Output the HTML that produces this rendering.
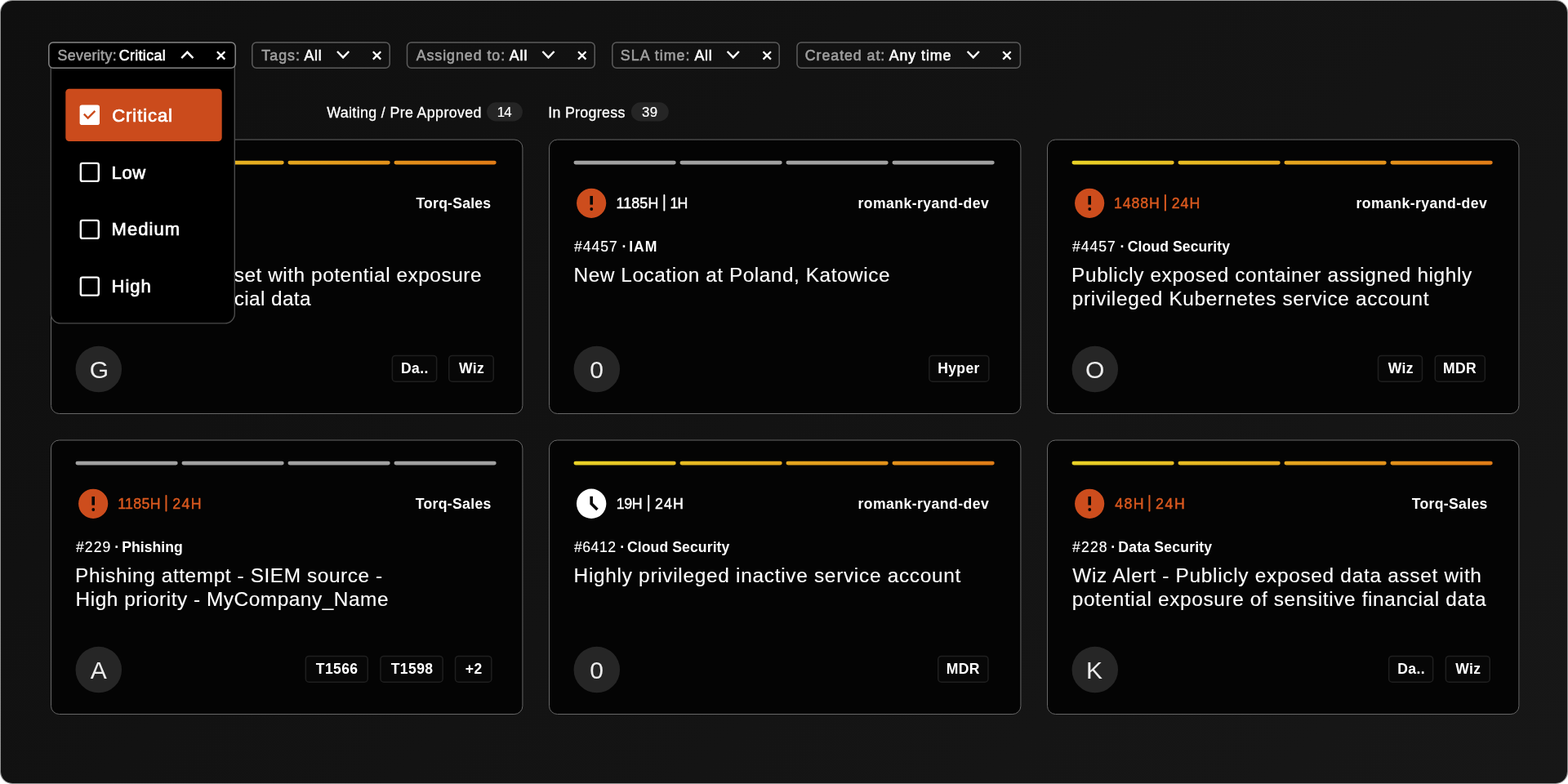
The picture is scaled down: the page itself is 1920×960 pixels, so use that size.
<!DOCTYPE html>
<html lang="en"><head><meta charset="utf-8"><title>Cases board</title>
<style>
html,body{margin:0;padding:0;background:#fff;}
body{width:1920px;height:960px;position:relative;overflow:hidden;font-family:"Liberation Sans",sans-serif;color:#fff;}
.panel{position:absolute;left:1px;top:1px;width:1918px;height:958px;border-radius:14px;background:linear-gradient(135deg,#0f0f0f 0%,#171717 100%);box-shadow:0 0 0 1px rgba(0,0,0,.42);overflow:hidden;}
.t{position:absolute;white-space:nowrap;line-height:1;}
.tx{position:absolute;left:0;top:0;width:1920px;height:960px;will-change:transform;z-index:1;}
.tx.top{z-index:6;}
svg{position:absolute;overflow:visible;}
.base{left:0;top:0;z-index:0;}
.ddsvg{left:0;top:0;z-index:5;}
</style></head><body>
<div class="panel"></div>

<svg class="base" width="1920" height="960" viewBox="0 0 1920 960"><defs><linearGradient id="pg" gradientUnits="userSpaceOnUse" x1="30.5" y1="0" x2="545.7" y2="0"><stop offset="0" stop-color="#e9d227"/><stop offset="1" stop-color="#e07c17"/></linearGradient></defs><rect x="308.8" y="51.9" width="168.4" height="31.3" rx="5.2" fill="none" stroke="#5c5c5c" stroke-width="1.5"/><rect x="498.5" y="51.9" width="229.7" height="31.3" rx="5.2" fill="none" stroke="#5c5c5c" stroke-width="1.5"/><rect x="749.8" y="51.9" width="204.4" height="31.3" rx="5.2" fill="none" stroke="#5c5c5c" stroke-width="1.5"/><rect x="976.0" y="51.9" width="273.4" height="31.3" rx="5.2" fill="none" stroke="#5c5c5c" stroke-width="1.5"/><path d="M413.00 63.0 L420.1 70.4 L427.20 63.0" fill="none" stroke="#fff" stroke-width="2.45" stroke-linecap="butt" stroke-linejoin="miter"/><path d="M456.80 63.20 L466.20 72.60 M466.20 63.20 L456.80 72.60" fill="none" stroke="#fff" stroke-width="2.3" stroke-linecap="butt"/><path d="M664.40 63.0 L671.5 70.4 L678.60 63.0" fill="none" stroke="#fff" stroke-width="2.45" stroke-linecap="butt" stroke-linejoin="miter"/><path d="M708.05 63.20 L717.45 72.60 M717.45 63.20 L708.05 72.60" fill="none" stroke="#fff" stroke-width="2.3" stroke-linecap="butt"/><path d="M890.65 63.0 L897.75 70.4 L904.85 63.0" fill="none" stroke="#fff" stroke-width="2.45" stroke-linecap="butt" stroke-linejoin="miter"/><path d="M934.55 63.20 L943.95 72.60 M943.95 63.20 L934.55 72.60" fill="none" stroke="#fff" stroke-width="2.3" stroke-linecap="butt"/><path d="M1184.65 63.0 L1191.75 70.4 L1198.85 63.0" fill="none" stroke="#fff" stroke-width="2.45" stroke-linecap="butt" stroke-linejoin="miter"/><path d="M1228.20 63.20 L1237.60 72.60 M1237.60 63.20 L1228.20 72.60" fill="none" stroke="#fff" stroke-width="2.3" stroke-linecap="butt"/><rect x="596.1" y="125.3" width="43.8" height="23.2" rx="11.6" fill="#252525"/><rect x="772.9" y="125.3" width="45.9" height="23.2" rx="11.6" fill="#252525"/><g transform="translate(62 170.5)"><rect x="0.5" y="0.5" width="577.4" height="335.5" rx="10" fill="#040404" stroke="#676767" stroke-width="1"/><rect x="30.5" y="26.2" width="125.2" height="4.75" rx="2.37" fill="url(#pg)"/><rect x="160.5" y="26.2" width="125.2" height="4.75" rx="2.37" fill="url(#pg)"/><rect x="290.5" y="26.2" width="125.2" height="4.75" rx="2.37" fill="url(#pg)"/><rect x="420.5" y="26.2" width="125.2" height="4.75" rx="2.37" fill="url(#pg)"/><circle cx="52.15" cy="78.3" r="18.1" fill="#cd4d1d"/><rect x="50.40" y="69.45" width="3.6" height="10.65" fill="#060606"/><circle cx="52.25" cy="85.50" r="1.9" fill="#060606"/><circle cx="58.8" cy="281.6" r="28.25" fill="#262626"/></g><g transform="translate(672 170.5)"><rect x="0.5" y="0.5" width="577.4" height="335.5" rx="10" fill="#040404" stroke="#676767" stroke-width="1"/><rect x="30.5" y="26.2" width="125.2" height="4.75" rx="2.37" fill="#a1a1a1"/><rect x="160.5" y="26.2" width="125.2" height="4.75" rx="2.37" fill="#a1a1a1"/><rect x="290.5" y="26.2" width="125.2" height="4.75" rx="2.37" fill="#a1a1a1"/><rect x="420.5" y="26.2" width="125.2" height="4.75" rx="2.37" fill="#a1a1a1"/><circle cx="52.15" cy="78.3" r="18.1" fill="#cd4d1d"/><rect x="50.40" y="69.45" width="3.6" height="10.65" fill="#060606"/><circle cx="52.25" cy="85.50" r="1.9" fill="#060606"/><circle cx="58.8" cy="281.6" r="28.25" fill="#262626"/></g><g transform="translate(1282 170.5)"><rect x="0.5" y="0.5" width="577.4" height="335.5" rx="10" fill="#040404" stroke="#676767" stroke-width="1"/><rect x="30.5" y="26.2" width="125.2" height="4.75" rx="2.37" fill="url(#pg)"/><rect x="160.5" y="26.2" width="125.2" height="4.75" rx="2.37" fill="url(#pg)"/><rect x="290.5" y="26.2" width="125.2" height="4.75" rx="2.37" fill="url(#pg)"/><rect x="420.5" y="26.2" width="125.2" height="4.75" rx="2.37" fill="url(#pg)"/><circle cx="52.15" cy="78.3" r="18.1" fill="#cd4d1d"/><rect x="50.40" y="69.45" width="3.6" height="10.65" fill="#060606"/><circle cx="52.25" cy="85.50" r="1.9" fill="#060606"/><circle cx="58.8" cy="281.6" r="28.25" fill="#262626"/></g><g transform="translate(62 538.5)"><rect x="0.5" y="0.5" width="577.4" height="335.5" rx="10" fill="#040404" stroke="#676767" stroke-width="1"/><rect x="30.5" y="26.2" width="125.2" height="4.75" rx="2.37" fill="#a1a1a1"/><rect x="160.5" y="26.2" width="125.2" height="4.75" rx="2.37" fill="#a1a1a1"/><rect x="290.5" y="26.2" width="125.2" height="4.75" rx="2.37" fill="#a1a1a1"/><rect x="420.5" y="26.2" width="125.2" height="4.75" rx="2.37" fill="#a1a1a1"/><circle cx="52.15" cy="78.3" r="18.1" fill="#cd4d1d"/><rect x="50.40" y="69.45" width="3.6" height="10.65" fill="#060606"/><circle cx="52.25" cy="85.50" r="1.9" fill="#060606"/><circle cx="58.8" cy="281.6" r="28.25" fill="#262626"/></g><g transform="translate(672 538.5)"><rect x="0.5" y="0.5" width="577.4" height="335.5" rx="10" fill="#040404" stroke="#676767" stroke-width="1"/><rect x="30.5" y="26.2" width="125.2" height="4.75" rx="2.37" fill="url(#pg)"/><rect x="160.5" y="26.2" width="125.2" height="4.75" rx="2.37" fill="url(#pg)"/><rect x="290.5" y="26.2" width="125.2" height="4.75" rx="2.37" fill="url(#pg)"/><rect x="420.5" y="26.2" width="125.2" height="4.75" rx="2.37" fill="url(#pg)"/><circle cx="52.15" cy="78.3" r="18.2" fill="#fff"/><path d="M52.15 69.20 V78.15 L59.45 85.45" fill="none" stroke="#060606" stroke-width="3.6" stroke-linejoin="miter"/><circle cx="58.8" cy="281.6" r="28.25" fill="#262626"/></g><g transform="translate(1282 538.5)"><rect x="0.5" y="0.5" width="577.4" height="335.5" rx="10" fill="#040404" stroke="#676767" stroke-width="1"/><rect x="30.5" y="26.2" width="125.2" height="4.75" rx="2.37" fill="url(#pg)"/><rect x="160.5" y="26.2" width="125.2" height="4.75" rx="2.37" fill="url(#pg)"/><rect x="290.5" y="26.2" width="125.2" height="4.75" rx="2.37" fill="url(#pg)"/><rect x="420.5" y="26.2" width="125.2" height="4.75" rx="2.37" fill="url(#pg)"/><circle cx="52.15" cy="78.3" r="18.1" fill="#cd4d1d"/><rect x="50.40" y="69.45" width="3.6" height="10.65" fill="#060606"/><circle cx="52.25" cy="85.50" r="1.9" fill="#060606"/><circle cx="58.8" cy="281.6" r="28.25" fill="#262626"/></g><rect x="205.50" y="238.1" width="2" height="20.5" rx="0.8" fill="#da591f"/><rect x="812.35" y="238.1" width="2" height="20.5" rx="0.8" fill="#fff"/><rect x="1425.90" y="238.1" width="2" height="20.5" rx="0.8" fill="#da591f"/><rect x="202.45" y="606.1" width="2" height="20.5" rx="0.8" fill="#da591f"/><rect x="793.20" y="606.1" width="2" height="20.5" rx="0.8" fill="#fff"/><rect x="1406.45" y="606.1" width="2" height="20.5" rx="0.8" fill="#da591f"/><rect x="480.35" y="435.45" width="54.30" height="31.8" rx="4" fill="#070707" stroke="#1f1f1f" stroke-width="1.5"/><rect x="549.75" y="435.45" width="54.50" height="31.8" rx="4" fill="#070707" stroke="#1f1f1f" stroke-width="1.5"/><rect x="1137.85" y="435.45" width="73.00" height="31.8" rx="4" fill="#070707" stroke="#1f1f1f" stroke-width="1.5"/><rect x="1687.55" y="435.45" width="53.95" height="31.8" rx="4" fill="#070707" stroke="#1f1f1f" stroke-width="1.5"/><rect x="1757.25" y="435.45" width="61.10" height="31.8" rx="4" fill="#070707" stroke="#1f1f1f" stroke-width="1.5"/><rect x="374.35" y="803.45" width="75.90" height="31.8" rx="4" fill="#070707" stroke="#1f1f1f" stroke-width="1.5"/><rect x="465.95" y="803.45" width="76.20" height="31.8" rx="4" fill="#070707" stroke="#1f1f1f" stroke-width="1.5"/><rect x="557.55" y="803.45" width="44.30" height="31.8" rx="4" fill="#070707" stroke="#1f1f1f" stroke-width="1.5"/><rect x="1148.75" y="803.45" width="61.20" height="31.8" rx="4" fill="#070707" stroke="#1f1f1f" stroke-width="1.5"/><rect x="1700.65" y="803.45" width="54.00" height="31.8" rx="4" fill="#070707" stroke="#1f1f1f" stroke-width="1.5"/><rect x="1770.35" y="803.45" width="53.90" height="31.8" rx="4" fill="#070707" stroke="#1f1f1f" stroke-width="1.5"/></svg>
<svg class="ddsvg" width="1920" height="960" viewBox="0 0 1920 960"><path d="M62.3 80 V383.9 a12 12 0 0 0 12 12 H275.3 a12 12 0 0 0 12 -12 V80 Z" fill="#000" stroke="#4b4b4b" stroke-width="1.4"/><rect x="59.8" y="51.9" width="228.4" height="31.3" rx="5.2" fill="#000" stroke="#858585" stroke-width="1.5"/><path d="M222.25 71.2 L229.35 63.8 L236.45 71.2" fill="none" stroke="#fff" stroke-width="2.45" stroke-linecap="butt" stroke-linejoin="miter"/><path d="M265.90 63.20 L275.30 72.60 M275.30 63.20 L265.90 72.60" fill="none" stroke="#fff" stroke-width="2.3" stroke-linecap="butt"/><rect x="80.3" y="108.7" width="191.4" height="64.3" rx="4.5" fill="#cb4b1c"/><rect x="97.6" y="128.5" width="24.4" height="24.6" rx="2.8" fill="#fff"/><path d="M102.85 139.7 L107.7 144.55 L116.35 135.9" fill="none" stroke="#cb4b1c" stroke-width="2.4"/><rect x="98.8" y="199.89999999999998" width="22" height="22" rx="2.2" fill="none" stroke="#fff" stroke-width="2.4"/><rect x="98.8" y="269.9" width="22" height="22" rx="2.2" fill="none" stroke="#fff" stroke-width="2.4"/><rect x="98.8" y="339.59999999999997" width="22" height="22" rx="2.2" fill="none" stroke="#fff" stroke-width="2.4"/></svg>
<div class="tx"><span class="t" id="f2a" style="left:320.31px;top:60.0px;font-size:17.8px;color:#a0a0a0;letter-spacing:1.047px;-webkit-text-stroke:0.55px #a0a0a0;">Tags:</span>
<span class="t" id="f2b" style="left:372.47px;top:60.0px;font-size:17.8px;color:#fff;letter-spacing:0.687px;-webkit-text-stroke:0.55px #fff;">All</span>
<span class="t" id="f3a" style="left:509.68px;top:60.0px;font-size:17.8px;color:#a0a0a0;letter-spacing:0.965px;-webkit-text-stroke:0.55px #a0a0a0;">Assigned to:</span>
<span class="t" id="f3b" style="left:623.68px;top:60.0px;font-size:17.8px;color:#fff;letter-spacing:0.962px;-webkit-text-stroke:0.55px #fff;">All</span>
<span class="t" id="f4a" style="left:759.80px;top:60.0px;font-size:17.8px;color:#a0a0a0;letter-spacing:1.070px;-webkit-text-stroke:0.55px #a0a0a0;">SLA time:</span>
<span class="t" id="f4b" style="left:850.47px;top:60.0px;font-size:17.8px;color:#fff;letter-spacing:0.781px;-webkit-text-stroke:0.55px #fff;">All</span>
<span class="t" id="f5a" style="left:985.84px;top:60.0px;font-size:17.8px;color:#a0a0a0;letter-spacing:0.944px;-webkit-text-stroke:0.55px #a0a0a0;">Created at:</span>
<span class="t" id="f5b" style="left:1088.68px;top:60.0px;font-size:17.8px;color:#fff;letter-spacing:0.952px;-webkit-text-stroke:0.55px #fff;">Any time</span>
<span class="t" id="tab1" style="left:400.27px;top:130.0px;font-size:17.8px;color:#fff;letter-spacing:0.376px;-webkit-text-stroke:0.3px #fff;">Waiting / Pre Approved</span>
<span class="t" id="tab1n" style="left:608.67px;top:130.0px;font-size:16.75px;color:#fff;letter-spacing:-0.800px;-webkit-text-stroke:0.2px #fff;">14</span>
<span class="t" id="tab2" style="left:671.14px;top:130.0px;font-size:17.8px;color:#fff;letter-spacing:0.336px;-webkit-text-stroke:0.3px #fff;">In Progress</span>
<span class="t" id="tab2n" style="left:786.05px;top:130.0px;font-size:16.75px;color:#fff;letter-spacing:0.315px;-webkit-text-stroke:0.2px #fff;">39</span>
<span class="t" id="c00t1" style="left:145.30px;top:241.0px;font-size:17.75px;color:#da591f;letter-spacing:0.000px;-webkit-text-stroke:0.45px #da591f;">1488H</span>
<span class="t" id="c00t2" style="left:215.50px;top:241.0px;font-size:17.75px;color:#da591f;letter-spacing:0.000px;-webkit-text-stroke:0.45px #da591f;">24H</span>
<span class="t" id="c00nm" style="left:509.42px;top:241.0px;font-size:17.6px;color:#fff;letter-spacing:0.233px;font-weight:700;">Torq-Sales</span>
<span class="t" id="c00id" style="left:92.80px;top:294.0px;font-size:17.6px;color:#fff;letter-spacing:0.000px;-webkit-text-stroke:0.15px #fff;">#231</span>
<span class="t" id="c00dot" style="left:140.80px;top:294.0px;font-size:17.6px;color:#fff;letter-spacing:0.000px;font-weight:700;">·</span>
<span class="t" id="c00cat" style="left:150.00px;top:294.0px;font-size:17.6px;color:#fff;letter-spacing:0.000px;font-weight:700;">Data Security</span>
<span class="t" id="c00ti0" style="right:1329.91px;top:325.0px;font-size:24.4px;color:#fff;letter-spacing:0.540px;-webkit-text-stroke:0.12px #fff;">Exposed data asset with potential exposure</span>
<span class="t" id="c00ti1" style="right:1539.13px;top:354.0px;font-size:24.4px;color:#fff;letter-spacing:0.360px;-webkit-text-stroke:0.12px #fff;">of sensitive financial data</span>
<span class="t" id="c01t1" style="left:754.58px;top:241.0px;font-size:17.75px;color:#fff;letter-spacing:0.159px;-webkit-text-stroke:0.45px #fff;">1185H</span>
<span class="t" id="c01t2" style="left:820.52px;top:241.0px;font-size:17.75px;color:#fff;letter-spacing:-0.800px;-webkit-text-stroke:0.45px #fff;">1H</span>
<span class="t" id="c01nm" style="left:1050.38px;top:241.0px;font-size:17.6px;color:#fff;letter-spacing:0.458px;font-weight:700;">romank-ryand-dev</span>
<span class="t" id="c01id" style="left:703.00px;top:294.0px;font-size:17.6px;color:#fff;letter-spacing:0.990px;-webkit-text-stroke:0.15px #fff;">#4457</span>
<span class="t" id="c01dot" style="left:761.57px;top:294.0px;font-size:17.6px;color:#fff;letter-spacing:0.000px;font-weight:700;">·</span>
<span class="t" id="c01cat" style="left:770.34px;top:294.0px;font-size:17.6px;color:#fff;letter-spacing:0.882px;font-weight:700;">IAM</span>
<span class="t" id="c01ti0" style="left:702.59px;top:325.0px;font-size:24.4px;color:#fff;letter-spacing:0.540px;-webkit-text-stroke:0.12px #fff;">New Location at Poland, Katowice</span>
<span class="t" id="c02t1" style="left:1364.07px;top:241.0px;font-size:17.75px;color:#da591f;letter-spacing:0.868px;-webkit-text-stroke:0.45px #da591f;">1488H</span>
<span class="t" id="c02t2" style="left:1434.63px;top:241.0px;font-size:17.75px;color:#da591f;letter-spacing:1.088px;-webkit-text-stroke:0.45px #da591f;">24H</span>
<span class="t" id="c02nm" style="left:1660.38px;top:241.0px;font-size:17.6px;color:#fff;letter-spacing:0.458px;font-weight:700;">romank-ryand-dev</span>
<span class="t" id="c02id" style="left:1313.00px;top:294.0px;font-size:17.6px;color:#fff;letter-spacing:0.990px;-webkit-text-stroke:0.15px #fff;">#4457</span>
<span class="t" id="c02dot" style="left:1371.57px;top:294.0px;font-size:17.6px;color:#fff;letter-spacing:0.000px;font-weight:700;">·</span>
<span class="t" id="c02cat" style="left:1380.70px;top:294.0px;font-size:17.6px;color:#fff;letter-spacing:0.091px;font-weight:700;">Cloud Security</span>
<span class="t" id="c02ti0" style="left:1312.10px;top:325.0px;font-size:24.4px;color:#fff;letter-spacing:0.610px;-webkit-text-stroke:0.12px #fff;">Publicly exposed container assigned highly</span>
<span class="t" id="c02ti1" style="left:1312.74px;top:354.0px;font-size:24.4px;color:#fff;letter-spacing:0.683px;-webkit-text-stroke:0.12px #fff;">privileged Kubernetes service account</span>
<span class="t" id="c10t1" style="left:144.18px;top:609.0px;font-size:17.75px;color:#da591f;letter-spacing:0.325px;-webkit-text-stroke:0.45px #da591f;">1185H</span>
<span class="t" id="c10t2" style="left:211.27px;top:609.0px;font-size:17.75px;color:#da591f;letter-spacing:1.388px;-webkit-text-stroke:0.45px #da591f;">24H</span>
<span class="t" id="c10nm" style="left:508.65px;top:609.0px;font-size:17.6px;color:#fff;letter-spacing:0.342px;font-weight:700;">Torq-Sales</span>
<span class="t" id="c10id" style="left:93.00px;top:662.0px;font-size:17.6px;color:#fff;letter-spacing:1.077px;-webkit-text-stroke:0.15px #fff;">#229</span>
<span class="t" id="c10dot" style="left:140.30px;top:662.0px;font-size:17.6px;color:#fff;letter-spacing:0.000px;font-weight:700;">·</span>
<span class="t" id="c10cat" style="left:149.37px;top:662.0px;font-size:17.6px;color:#fff;letter-spacing:0.011px;font-weight:700;">Phishing</span>
<span class="t" id="c10ti0" style="left:92.10px;top:693.0px;font-size:24.4px;color:#fff;letter-spacing:0.589px;-webkit-text-stroke:0.12px #fff;">Phishing attempt - SIEM source -</span>
<span class="t" id="c10ti1" style="left:92.59px;top:722.0px;font-size:24.4px;color:#fff;letter-spacing:0.536px;-webkit-text-stroke:0.12px #fff;">High priority - MyCompany_Name</span>
<span class="t" id="c11t1" style="left:754.71px;top:609.0px;font-size:17.75px;color:#fff;letter-spacing:-0.377px;-webkit-text-stroke:0.45px #fff;">19H</span>
<span class="t" id="c11t2" style="left:801.92px;top:609.0px;font-size:17.75px;color:#fff;letter-spacing:1.204px;-webkit-text-stroke:0.45px #fff;">24H</span>
<span class="t" id="c11nm" style="left:1050.38px;top:609.0px;font-size:17.6px;color:#fff;letter-spacing:0.458px;font-weight:700;">romank-ryand-dev</span>
<span class="t" id="c11id" style="left:703.00px;top:662.0px;font-size:17.6px;color:#fff;letter-spacing:0.524px;-webkit-text-stroke:0.15px #fff;">#6412</span>
<span class="t" id="c11dot" style="left:759.17px;top:662.0px;font-size:17.6px;color:#fff;letter-spacing:0.000px;font-weight:700;">·</span>
<span class="t" id="c11cat" style="left:767.98px;top:662.0px;font-size:17.6px;color:#fff;letter-spacing:0.095px;font-weight:700;">Cloud Security</span>
<span class="t" id="c11ti0" style="left:702.59px;top:693.0px;font-size:24.4px;color:#fff;letter-spacing:0.710px;-webkit-text-stroke:0.12px #fff;">Highly privileged inactive service account</span>
<span class="t" id="c12t1" style="left:1365.21px;top:609.0px;font-size:17.75px;color:#da591f;letter-spacing:1.341px;-webkit-text-stroke:0.45px #da591f;">48H</span>
<span class="t" id="c12t2" style="left:1415.12px;top:609.0px;font-size:17.75px;color:#da591f;letter-spacing:1.517px;-webkit-text-stroke:0.45px #da591f;">24H</span>
<span class="t" id="c12nm" style="left:1728.65px;top:609.0px;font-size:17.6px;color:#fff;letter-spacing:0.342px;font-weight:700;">Torq-Sales</span>
<span class="t" id="c12id" style="left:1313.00px;top:662.0px;font-size:17.6px;color:#fff;letter-spacing:1.158px;-webkit-text-stroke:0.15px #fff;">#228</span>
<span class="t" id="c12dot" style="left:1360.29px;top:662.0px;font-size:17.6px;color:#fff;letter-spacing:0.000px;font-weight:700;">·</span>
<span class="t" id="c12cat" style="left:1369.34px;top:662.0px;font-size:17.6px;color:#fff;letter-spacing:0.194px;font-weight:700;">Data Security</span>
<span class="t" id="c12ti0" style="left:1313.25px;top:693.0px;font-size:24.4px;color:#fff;letter-spacing:0.704px;-webkit-text-stroke:0.12px #fff;">Wiz Alert - Publicly exposed data asset with</span>
<span class="t" id="c12ti1" style="left:1312.74px;top:722.0px;font-size:24.4px;color:#fff;letter-spacing:0.626px;-webkit-text-stroke:0.12px #fff;">potential exposure of sensitive financial data</span>
<span class="t" id="av0" style="left:91.42px;width:60px;text-align:center;top:438.0px;font-size:30px;color:#ececec">G</span>
<span class="t" id="av1" style="left:700.61px;width:60px;text-align:center;top:438.0px;font-size:30px;color:#ececec">0</span>
<span class="t" id="av2" style="left:1310.66px;width:60px;text-align:center;top:438.0px;font-size:30px;color:#ececec">O</span>
<span class="t" id="av3" style="left:90.81px;width:60px;text-align:center;top:806.0px;font-size:30px;color:#ececec">A</span>
<span class="t" id="av4" style="left:700.61px;width:60px;text-align:center;top:806.0px;font-size:30px;color:#ececec">0</span>
<span class="t" id="av5" style="left:1310.05px;width:60px;text-align:center;top:806.0px;font-size:30px;color:#ececec">K</span>
<span class="t" id="tg0" style="left:480.64px;width:54.4px;text-align:center;top:443.0px;font-size:17.5px;font-weight:700;letter-spacing:0.4px">Da..</span>
<span class="t" id="tg1" style="left:550.18px;width:54.6px;text-align:center;top:443.0px;font-size:17.5px;font-weight:700;letter-spacing:0.4px">Wiz</span>
<span class="t" id="tg2" style="left:1137.43px;width:73.1px;text-align:center;top:443.0px;font-size:17.5px;font-weight:700;letter-spacing:0.4px">Hyper</span>
<span class="t" id="tg3" style="left:1688.26px;width:54.0px;text-align:center;top:443.0px;font-size:17.5px;font-weight:700;letter-spacing:0.4px">Wiz</span>
<span class="t" id="tg4" style="left:1756.92px;width:61.2px;text-align:center;top:443.0px;font-size:17.5px;font-weight:700;letter-spacing:0.4px">MDR</span>
<span class="t" id="tg5" style="left:374.64px;width:76.0px;text-align:center;top:811.0px;font-size:17.5px;font-weight:700;letter-spacing:0.4px">T1566</span>
<span class="t" id="tg6" style="left:466.46px;width:76.3px;text-align:center;top:811.0px;font-size:17.5px;font-weight:700;letter-spacing:0.4px">T1598</span>
<span class="t" id="tg7" style="left:558.03px;width:44.4px;text-align:center;top:811.0px;font-size:17.5px;font-weight:700;letter-spacing:0.4px">+2</span>
<span class="t" id="tg8" style="left:1148.58px;width:61.3px;text-align:center;top:811.0px;font-size:17.5px;font-weight:700;letter-spacing:0.4px">MDR</span>
<span class="t" id="tg9" style="left:1701.07px;width:54.1px;text-align:center;top:811.0px;font-size:17.5px;font-weight:700;letter-spacing:0.4px">Da..</span>
<span class="t" id="tg10" style="left:1770.81px;width:54.0px;text-align:center;top:811.0px;font-size:17.5px;font-weight:700;letter-spacing:0.4px">Wiz</span></div>
<div class="tx top"><span class="t" id="f1a" style="left:70.44px;top:60.0px;font-size:17.8px;color:#a0a0a0;letter-spacing:0.372px;-webkit-text-stroke:0.55px #a0a0a0;">Severity:</span>
<span class="t" id="f1b" style="left:145.80px;top:60.0px;font-size:17.8px;color:#fff;letter-spacing:0.356px;-webkit-text-stroke:0.55px #fff;">Critical</span>
<span class="t" id="d1" style="left:137.31px;top:131.0px;font-size:22px;color:#fff;letter-spacing:0.924px;-webkit-text-stroke:0.7px #fff;">Critical</span>
<span class="t" id="d2" style="left:136.52px;top:201.0px;font-size:22px;color:#fff;letter-spacing:0.688px;-webkit-text-stroke:0.7px #fff;">Low</span>
<span class="t" id="d3" style="left:136.52px;top:270.0px;font-size:22px;color:#fff;letter-spacing:1.059px;-webkit-text-stroke:0.7px #fff;">Medium</span>
<span class="t" id="d4" style="left:136.52px;top:340.0px;font-size:22px;color:#fff;letter-spacing:1.014px;-webkit-text-stroke:0.7px #fff;">High</span></div>
</body></html>
